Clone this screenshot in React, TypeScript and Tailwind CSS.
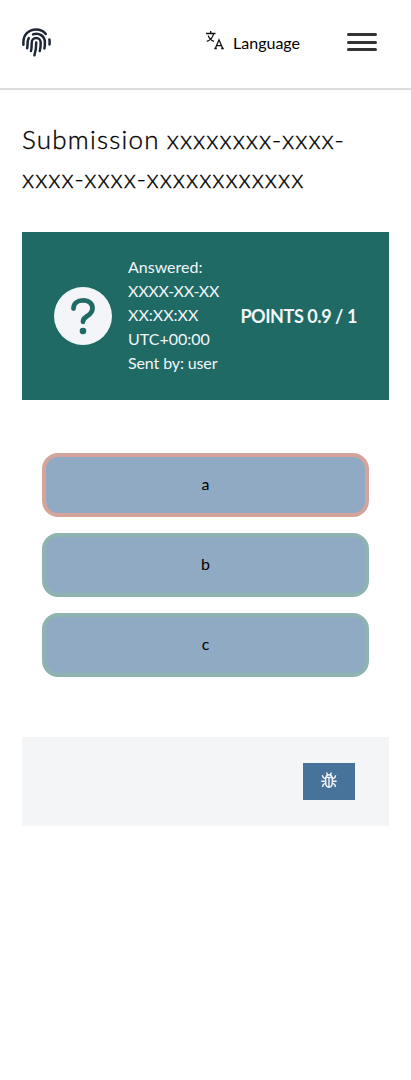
const options = [
  { label: "a", border: "border-[#d4a49a]" },
  { label: "b", border: "border-[#8fb3b0]" },
  { label: "c", border: "border-[#8fb3b0]" },
];

function FingerprintIcon() {
  return (
    <svg
      className="mt-[27.5px]"
      width="29"
      height="29"
      viewBox="0 0 29 29"
      fill="none"
      stroke="#1c2733"
      strokeWidth="2.5"
      strokeLinecap="round"
    >
      <path d="M1.4 16.8V13.8C1.4 6.8 7 1.4 14 1.4C18 1.4 21.6 3.1 23.8 6" />
      <path d="M27.4 11.6C27.7 13.2 27.7 14.8 27.5 16.4" />
      <path d="M5.2 20.2C5.6 18.2 5.6 16.6 5.6 14.6C5.6 13 6 11.5 6.8 10.1" />
      <path d="M11 6.4C16.8 4.1 22.9 8 22.9 14.4C22.9 16.6 22.8 18.5 22.4 20.4" />
      <path d="M9 23C9.7 20.4 9.7 17.6 9.7 14.7C9.7 12 11.5 10 14.2 10C16.8 10 18.7 12 18.7 14.7C18.7 17.6 18.5 20.3 17.8 23" />
      <path d="M14.2 14.5C14.3 18.8 13.8 23.2 12.4 27.3" />
    </svg>
  );
}

function TranslateIcon() {
  return (
    <svg width="20" height="20" viewBox="0 0 20 20" fill="none" stroke="#111" strokeWidth="1.3">
      <path d="M1 3.5H10.5M5.7 1V3.5M8.6 3.5C8 7 5 10.3 1.8 11.3M3.2 5.6C4.2 8.5 6.3 10.4 9 11.3" />
      <path d="M10.3 18.5L14 9.8L17.7 18.5M11.6 15.6H16.4M9.3 18.5H11.8M16.2 18.5H18.8" />
    </svg>
  );
}

function BugIcon() {
  return (
    <svg className="mb-[3px]" width="16" height="16" viewBox="0 0 16 16" fill="none" stroke="currentColor" strokeWidth="1.4">
      <path d="M4.7 5.4H11.3V10.5C11.3 13.3 10 15.2 8 15.2S4.7 13.3 4.7 10.5ZM8 5.4V15.2M5.3 5.2C5.3 3.6 6.3 2.7 8 2.7S10.7 3.6 10.7 5.2M6.5 2.8L5.6 .5M9.5 2.8L10.4 .5" />
      <path d="M4.7 6.8L2.3 5.8L1.3 3.3M4.7 9.3H.3M4.8 11.2L2.3 12.4L1.4 15M11.3 6.8L13.7 5.8L14.7 3.3M11.3 9.3H15.7M11.2 11.2L13.7 12.4L14.6 15" />
    </svg>
  );
}

function QuestionIcon() {
  return (
    <svg className="shrink-0" width="58" height="58" viewBox="0 0 58 58" fill="none">
      <circle cx="29" cy="29" r="29" fill="#f4f5f8" />
      <path
        d="M19.5 21.5C19.5 16.5 23.5 13.3 29 13.3C34.8 13.3 38.5 16.6 38.5 21.3C38.5 25.2 36.4 27 33.3 29.1C30.3 31.1 29 32 29 34.8"
        stroke="#1f6a65"
        strokeWidth="4.8"
        strokeLinecap="round"
        strokeLinejoin="round"
      />
      <circle cx="29" cy="44" r="3.3" fill="#1f6a65" />
    </svg>
  );
}

export default function App() {
  return (
    <div className="min-h-[1080px] bg-white font-['Lato',sans-serif] text-base text-black">
      <header className="flex h-[90px] items-start border-b-2 border-[#dddddd] pl-[22px] pr-[34px]">
        <FingerprintIcon />
        <button className="ml-auto mt-[30px] flex items-start gap-2">
          <TranslateIcon />
          <span className="mt-px leading-6">Language</span>
        </button>
        <button aria-label="Menu" className="ml-[47px] mt-[33px] flex w-[30px] flex-col gap-[4.5px]">
          <span className="h-[3px] rounded-full bg-[#333]" />
          <span className="h-[3px] rounded-full bg-[#333]" />
          <span className="h-[3px] rounded-full bg-[#333]" />
        </button>
      </header>
      <main className="px-[22px] pt-[30px]">
        <h1 className="whitespace-nowrap text-[26px] font-light leading-[39px] [-webkit-text-stroke:0.35px_black]">
          <span className="block"><span className="tracking-[1.2px]">Submission</span> <span className="tracking-[1px]">xxxxxxxx-xxxx-</span></span>
          <span className="block tracking-[0.95px]">xxxx-xxxx-xxxxxxxxxxxx</span>
        </h1>
        <section className="mt-[34px] flex h-[168px] items-center bg-[#1f6a65] px-8 text-[#f4f5f8]">
          <QuestionIcon />
          <p className="mb-0.5 ml-4 whitespace-nowrap leading-6">
            Answered:<br /><span className="tracking-[-0.23px]">XXXX-XX-XX</span><br />XX:XX:XX<br />UTC+00:00<br /><span className="tracking-[-0.12px]">Sent by: user</span>
          </p>
          <strong className="ml-auto whitespace-nowrap text-lg font-bold tracking-[-0.43px]">POINTS 0.9 / 1</strong>
        </section>
        <div className="mt-[53px] flex flex-col gap-4 px-5">
          {options.map((option) => (
            <button
              key={option.label}
              className={`h-16 rounded-2xl border-4 bg-[#91aac4] pb-0.5 ${option.border}`}
            >
              {option.label}
            </button>
          ))}
        </div>
        <footer className="mt-[60px] flex h-[89px] items-center justify-end bg-[#f4f5f7] pr-[34px]">
          <button aria-label="Debug" className="flex h-[37px] w-[52px] items-center justify-center bg-[#47739b] text-[#f4f5f8]">
            <BugIcon />
          </button>
        </footer>
      </main>
    </div>
  );
}
